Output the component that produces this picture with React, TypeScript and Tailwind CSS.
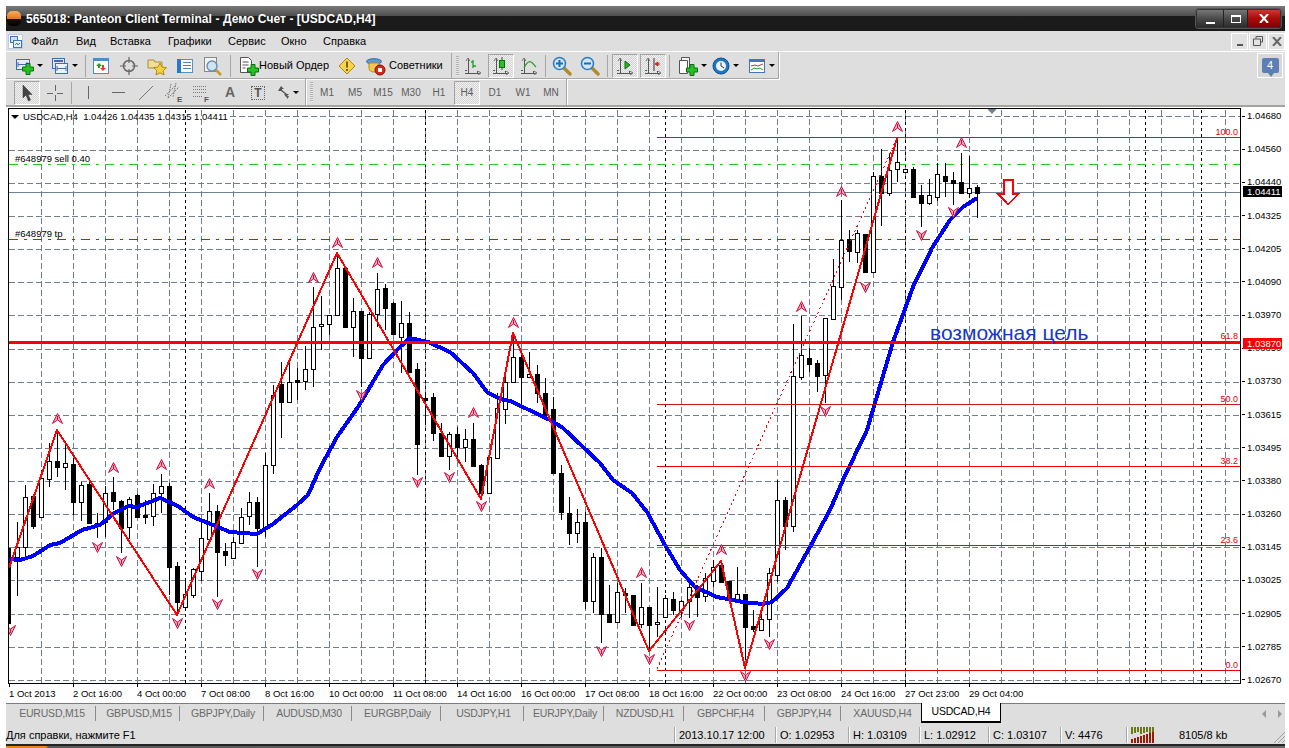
import type { ReactNode } from "react";

type Candle = [number, number, number, number, number];

// high, body top, body bottom, low, black
const candles: Candle[] = [
  [548, 548, 623, 623, 1], [522, 547, 557, 596, 0], [485, 497, 547, 559, 0], [496, 496, 526, 529, 1],
  [470, 478, 517, 518, 0], [443, 461, 479, 487, 0], [430, 461, 467, 477, 1], [445, 463, 467, 490, 0],
  [458, 464, 502, 515, 1], [482, 485, 502, 521, 0], [478, 484, 523, 524, 1], [513, 523, 524, 538, 1],
  [486, 493, 522, 537, 0], [477, 492, 501, 510, 1], [500, 501, 528, 553, 1], [497, 499, 527, 539, 0],
  [494, 495, 517, 518, 1], [500, 515, 517, 524, 1], [484, 493, 516, 526, 0], [474, 486, 493, 513, 0],
  [483, 486, 567, 595, 1], [562, 566, 602, 615, 1], [578, 594, 607, 608, 0], [568, 569, 595, 598, 0],
  [522, 538, 571, 581, 0], [493, 511, 539, 539, 0], [505, 511, 552, 597, 1], [543, 551, 555, 566, 1],
  [537, 542, 558, 559, 0], [508, 517, 543, 543, 0], [492, 502, 516, 525, 0], [497, 502, 528, 567, 1],
  [453, 465, 528, 537, 0], [385, 395, 465, 474, 0], [362, 384, 402, 438, 1], [358, 382, 402, 403, 0],
  [368, 380, 382, 400, 1], [346, 369, 381, 390, 0], [287, 327, 369, 387, 0], [296, 324, 326, 350, 0],
  [315, 315, 324, 335, 0], [255, 268, 315, 315, 0], [267, 268, 327, 328, 1], [298, 311, 327, 357, 0],
  [311, 311, 358, 387, 1], [312, 314, 358, 358, 0], [273, 289, 314, 327, 0], [284, 288, 308, 330, 1],
  [302, 303, 334, 335, 1], [301, 323, 337, 373, 0], [312, 323, 372, 372, 1], [363, 369, 444, 475, 1],
  [392, 398, 400, 425, 1], [393, 397, 433, 441, 1], [423, 433, 456, 457, 1], [432, 434, 456, 470, 0],
  [427, 434, 447, 461, 1], [429, 439, 447, 462, 0], [423, 439, 466, 467, 1], [464, 465, 493, 498, 1],
  [452, 457, 493, 493, 0], [393, 408, 458, 459, 0], [377, 382, 409, 424, 0], [335, 357, 382, 383, 0],
  [353, 357, 377, 407, 1], [352, 374, 377, 377, 0], [365, 374, 393, 403, 1], [378, 393, 415, 417, 1],
  [397, 409, 473, 473, 1], [465, 473, 512, 520, 1], [497, 513, 533, 545, 1], [509, 522, 533, 543, 0],
  [512, 522, 601, 609, 1], [553, 557, 601, 613, 0], [548, 557, 614, 643, 1], [585, 614, 622, 623, 1],
  [583, 592, 622, 623, 0], [588, 593, 595, 613, 1], [595, 595, 625, 626, 1], [583, 607, 624, 628, 0],
  [607, 607, 625, 650, 1], [587, 622, 624, 637, 0], [595, 598, 617, 618, 0], [592, 599, 610, 615, 1],
  [600, 601, 610, 617, 0], [580, 587, 601, 618, 0], [585, 587, 597, 617, 1], [573, 578, 596, 602, 0],
  [560, 567, 581, 587, 0], [563, 565, 582, 582, 1], [581, 581, 597, 602, 1], [567, 594, 601, 602, 0],
  [594, 594, 627, 660, 1], [610, 626, 629, 632, 1], [613, 619, 630, 630, 0], [568, 573, 619, 637, 0],
  [480, 500, 575, 582, 0], [497, 500, 526, 550, 1], [324, 376, 526, 532, 0], [316, 355, 377, 380, 0],
  [348, 358, 364, 372, 1], [360, 363, 376, 392, 1], [318, 318, 375, 403, 0], [259, 286, 319, 319, 0],
  [200, 240, 287, 300, 0], [230, 239, 251, 262, 1], [230, 233, 252, 263, 0], [234, 234, 272, 272, 1],
  [172, 176, 272, 273, 0], [149, 176, 193, 226, 1], [153, 170, 193, 196, 0], [140, 162, 169, 182, 0],
  [169, 169, 172, 172, 0], [167, 169, 197, 197, 1], [185, 195, 203, 227, 1], [179, 195, 203, 205, 0],
  [163, 174, 197, 201, 0], [163, 176, 181, 197, 1], [172, 180, 183, 205, 1], [153, 182, 193, 193, 1],
  [156, 188, 193, 198, 0], [185, 187, 193, 218, 1],
];

const zigzag = "9,568 57,430 177,615 337,253 481,499 513,333 649,651 721,561 745,668 897,138";

const ma =
  "9,559 20,560 33,556 50,545 60,543 82,530 100,525 113,514 128,506 137,507 160,498 178,506 193,517 213,525 230,532 257,534 273,524 297,505 308,495 320,468 337,437 358,407 383,365 400,347 410,338 428,342 450,352 473,373 487,392 500,399 510,401 527,409 550,420 563,428 583,447 600,463 613,480 632,493 647,512 665,545 680,570 695,587 717,597 743,602 763,604 772,602 787,588 810,547 830,510 843,480 867,430 893,342 913,287 932,248 950,220 963,207 977,198";

const upMarks = [[57, 419], [113, 468], [161, 465], [209, 484], [313, 278], [337, 243], [377, 263], [473, 413], [513, 323], [641, 573], [721, 550], [801, 307], [841, 192], [897, 127], [961, 143]];
const downMarks = [[97, 547], [121, 561], [177, 623], [217, 604], [257, 574], [10, 630], [361, 395], [417, 482], [449, 477], [481, 506], [601, 651], [649, 659], [689, 625], [769, 644], [745, 676], [865, 287], [825, 411], [921, 235], [953, 212]];

const prices = ["1.04680", "1.04560", "1.04440", "1.04325", "1.04205", "1.04090", "1.03970", "1.03850", "1.03730", "1.03615", "1.03495", "1.03380", "1.03260", "1.03145", "1.03025", "1.02905", "1.02785", "1.02670"];
const gridY = [116, 150, 183, 216, 249, 282, 315, 349, 382, 415, 448, 481, 514, 547, 580, 614, 647, 680];
const gridX = Array.from({ length: 38 }, (_, i) => 41 + 32 * i);
const dotX = [185, 425, 665, 905, 1145, 1201];

const times = ["1 Oct 2013", "2 Oct 16:00", "4 Oct 00:00", "7 Oct 08:00", "8 Oct 16:00", "10 Oct 00:00", "11 Oct 08:00", "14 Oct 16:00", "16 Oct 00:00", "17 Oct 08:00", "18 Oct 16:00", "22 Oct 00:00", "23 Oct 08:00", "24 Oct 16:00", "27 Oct 23:00", "29 Oct 04:00"];

const fibo = [
  { y: 137, label: "100.0", c: "#c81818" },
  { y: 404, label: "50.0", c: "#c81818" },
  { y: 466, label: "38.2", c: "#f00000" },
  { y: 545, label: "23.6", c: "#f00000" },
  { y: 670, label: "0.0", c: "#e00000" },
];

const tabs = [
  { name: "EURUSD,M15", w: "w-[90px]" },
  { name: "GBPUSD,M15", w: "w-[84px]" },
  { name: "GBPJPY,Daily", w: "w-[84px]" },
  { name: "AUDUSD,M30", w: "w-[88px]" },
  { name: "EURGBP,Daily", w: "w-[89px]" },
  { name: "USDJPY,H1", w: "w-[83px]" },
  { name: "EURJPY,Daily", w: "w-[80px]" },
  { name: "NZDUSD,H1", w: "w-[80px]" },
  { name: "GBPCHF,H4", w: "w-[81px]" },
  { name: "GBPJPY,H4", w: "w-[76px]" },
  { name: "XAUUSD,H4", w: "w-[80px]" },
];

const frames = ["M1", "M5", "M15", "M30", "H1", "H4", "D1", "W1", "MN"];

const activeCls =
  "border border-t-[#a4a4a4] border-l-[#a4a4a4] border-b-white border-r-white bg-[repeating-conic-gradient(#d2d2d2_0%_25%,#f2f2f2_0%_50%)] bg-[length:2px_2px]";

function GreenPlus({ x, y }: { x: number; y: number }) {
  return (
    <path
      transform={`translate(${x} ${y})`}
      d="M3.5 0h4v3.5H11v4H7.500V11h-4V7.500H0v-4h3.500z"
      fill="#22c322"
      stroke="#0a6e0a"
      strokeWidth="1"
    />
  );
}

function Arrowhead() {
  return <span className="ml-[3px] h-0 w-0 border-x-[3px] border-t-[3px] border-x-transparent border-t-black" />;
}

function Axes({ children }: { children?: ReactNode }) {
  return (
    <svg width="18" height="18" viewBox="0 0 18 18">
      <path d="M4 1v15M1 13h2M1 16h15M13 14v3" stroke="#555" strokeWidth="1" fill="none" shapeRendering="crispEdges" />
      <path d="M2 4l2-3 2 3M14 14l3 2-3 2" stroke="#777" fill="none" strokeWidth="1" />
      {children}
    </svg>
  );
}

function Lens({ minus }: { minus?: boolean }) {
  return (
    <svg width="20" height="20" viewBox="0 0 20 20">
      <path d="M11.500 11.500L18 18" stroke="#b08a2c" strokeWidth="3.500" strokeLinecap="round" />
      <circle cx="7.500" cy="7.500" r="6" fill="#cfe6f8" stroke="#2f7fc0" strokeWidth="1.600" />
      <path d={minus ? "M4 7.500h7" : "M4 7.500h7M7.500 4v7"} stroke="#1d6cb0" strokeWidth="2" />
    </svg>
  );
}

function Slot({ w, active, children }: { w: string; active?: boolean; children: ReactNode }) {
  return (
    <div className={`flex h-[24px] shrink-0 items-center justify-center ${w}`}>
      {active ? (
        <div className={`flex h-[24px] w-[26px] items-center justify-center ${activeCls}`}>{children}</div>
      ) : (
        children
      )}
    </div>
  );
}

function Sep({ w }: { w: string }) {
  return (
    <div className={`flex h-[22px] shrink-0 justify-center ${w}`}>
      <div className="h-full w-px bg-[#a6a6a6]" />
    </div>
  );
}

function Gripper() {
  return <div className="ml-[4px] h-[20px] w-[3px] shrink-0 bg-[repeating-linear-gradient(#b0b0b0_0_1px,#e8e8e8_1px_2px)]" />;
}

function ChartToolbar() {
  return (
    <div className="flex h-[27px] items-center bg-[#dedede]">
      <div className="flex h-[27px] w-[773px] shrink-0 items-center border-r border-b border-[#a8a8a8] pl-[8px] pt-px shadow-[1px_1px_0_#fff]">
        <div className="flex h-[24px] w-[34px] shrink-0 items-center pl-[1px]">
          <svg width="19" height="18" viewBox="0 0 19 18">
            <rect x="1.500" y="2.500" width="13" height="10" fill="#e4ecf6" stroke="#3f6fa8" />
            <path d="M3 5v5M3 7.500h9M12 5v5" stroke="#3f6fa8" />
            <GreenPlus x={7.500} y={6.500} />
          </svg>
          <Arrowhead />
        </div>
        <div className="flex h-[24px] w-[36px] shrink-0 items-center pl-[3px]">
          <svg width="18" height="18" viewBox="0 0 18 18">
            <rect x="1.500" y="1.500" width="12" height="10" fill="#dbe6f3" stroke="#3f6fa8" />
            <path d="M3 4h9" stroke="#3f6fa8" strokeWidth="2" />
            <rect x="4.500" y="6.500" width="12" height="10" fill="#eef3fa" stroke="#3f6fa8" />
            <path d="M6 11.500h9M6 9v5M15 9v5" stroke="#3f6fa8" />
          </svg>
          <Arrowhead />
        </div>
        <Sep w="w-[3px]" />
        <Slot w="w-[28px]">
          <svg width="18" height="18" viewBox="0 0 18 18">
            <rect x="1.500" y="1.500" width="15" height="15" fill="#fff" stroke="#4d8dc9" />
            <path d="M2 2h14v2H2z" fill="#4d8dc9" />
            <path d="M7 6l3 3H8v2H6V9H4z" fill="#1aa61a" />
            <path d="M11 14l-3-3h2V8h2v3h2z" fill="#e0402a" />
          </svg>
        </Slot>
        <Slot w="w-[28px]">
          <svg width="18" height="18" viewBox="0 0 18 18" fill="none" stroke="#666">
            <circle cx="9" cy="9" r="5.500" strokeWidth="1.500" />
            <path d="M9 0v6M9 12v6M0 9h6M12 9h6" strokeWidth="1.200" />
          </svg>
        </Slot>
        <Slot w="w-[28px]">
          <svg width="20" height="20" viewBox="0 0 20 20">
            <path d="M1 4h6l1 2h7v6H1z" fill="#f3dd9a" stroke="#a98b3a" />
            <path d="M13 7l2 4 4.500.6-3.300 3 .9 4.400-4.100-2.200-4 2.200.8-4.400-3.200-3 4.400-.6z" fill="#f6d23a" stroke="#b08a1e" />
          </svg>
        </Slot>
        <Slot w="w-[28px]">
          <svg width="18" height="18" viewBox="0 0 18 18">
            <rect x="1.500" y="2.500" width="15" height="13" fill="#fff" stroke="#5b8fc4" />
            <rect x="1" y="2" width="4" height="14" fill="#2b78c6" />
            <path d="M7 5.500h8M7 8.500h8M7 11.500h8" stroke="#4f81b5" />
          </svg>
        </Slot>
        <Slot w="w-[28px]">
          <svg width="20" height="20" viewBox="0 0 20 20">
            <rect x="1.500" y="1.500" width="12" height="14" fill="#f3f3f3" stroke="#888" />
            <path d="M12 13l6 6" stroke="#c49a2e" strokeWidth="2.500" />
            <circle cx="9" cy="10" r="5" fill="#cfe3f3" stroke="#6a8fb0" strokeWidth="1.400" />
          </svg>
        </Slot>
        <Sep w="w-[6px]" />
        <div className="flex h-[24px] w-[100px] shrink-0 items-center pl-[6px]">
          <svg width="20" height="20" viewBox="0 0 20 20">
            <path d="M1.500 1.500h8l3 3v12h-11z" fill="#fff" stroke="#555" />
            <path d="M3.500 6h6M3.500 9h6M3.500 12h3" stroke="#555" />
            <GreenPlus x={8.500} y={8.500} />
          </svg>
          <span className="whitespace-nowrap">Новый Ордер</span>
        </div>
        <Slot w="w-[28px]">
          <svg width="18" height="18" viewBox="0 0 18 18">
            <path d="M9 1l8 8-8 8-8-8z" fill="#f7d44a" stroke="#a8871c" />
            <path d="M9 4.500v6M9 12v2" stroke="#80601a" strokeWidth="2" />
          </svg>
        </Slot>
        <div className="flex h-[24px] w-[87px] shrink-0 items-center pl-[5px]">
          <svg width="20" height="20" viewBox="0 0 20 20">
            <ellipse cx="8" cy="5.500" rx="7.500" ry="2.800" fill="#5d9ad4" stroke="#2f6aa3" />
            <path d="M3 7h10v4c0 4-2 5-5 5s-5-1-5-5z" fill="#f5c945" stroke="#b08a1e" />
            <circle cx="14" cy="14" r="5" fill="#d8281c" stroke="#7a1410" />
            <rect x="12" y="12" width="4" height="4" fill="#fff" />
          </svg>
          <span className="ml-[3px] whitespace-nowrap">Советники</span>
        </div>
        <div className="ml-[3px] h-[26px] w-px bg-[#a8a8a8]" />
        <Gripper />
        <Slot w="w-[28px]">
          <Axes>
            <path d="M9 3v8M7 5h2M9 9h3" stroke="#1ea01e" strokeWidth="1.300" fill="none" />
          </Axes>
        </Slot>
        <Slot w="w-[28px]" active>
          <Axes>
            <path d="M10 0v13" stroke="#0e6e0e" />
            <rect x="7.500" y="3.500" width="5" height="7" fill="#27c427" stroke="#0e6e0e" />
          </Axes>
        </Slot>
        <Slot w="w-[28px]">
          <Axes>
            <path d="M4 11c3-6 5-7 7-6s3 3 5 5" stroke="#1ea01e" strokeWidth="1.200" fill="none" />
          </Axes>
        </Slot>
        <Sep w="w-[5px]" />
        <Slot w="w-[28px]">
          <Lens />
        </Slot>
        <Slot w="w-[28px]">
          <Lens minus />
        </Slot>
        <Sep w="w-[7px]" />
        <Slot w="w-[28px]" active>
          <Axes>
            <path d="M9 4l5 4-5 4z" fill="#25b825" stroke="#0e6e0e" />
          </Axes>
        </Slot>
        <Slot w="w-[28px]" active>
          <Axes>
            <path d="M10 1v13" stroke="#333" />
            <path d="M16 7h-4M11 7l3-2v4z" fill="#d02a1a" stroke="#d02a1a" />
          </Axes>
        </Slot>
        <Sep w="w-[5px]" />
        <div className="flex h-[24px] w-[36px] shrink-0 items-center pl-[6px]">
          <svg width="20" height="20" viewBox="0 0 20 20">
            <path d="M3.500 1.500h8v13h-8z" fill="#f4f4f4" stroke="#555" />
            <path d="M1.500 4.500h8v13h-8z" fill="#fff" stroke="#555" />
            <GreenPlus x={8.500} y={8.500} />
          </svg>
          <Arrowhead />
        </div>
        <div className="flex h-[24px] w-[37px] shrink-0 items-center pl-[4px]">
          <svg width="18" height="18" viewBox="0 0 18 18">
            <circle cx="9" cy="9" r="8" fill="#1e78c8" stroke="#0b4f8f" />
            <circle cx="9" cy="9" r="5" fill="#eef4fa" />
            <path d="M9 5.500V9l3 2" stroke="#333" fill="none" />
          </svg>
          <Arrowhead />
        </div>
        <div className="flex h-[24px] w-[32px] shrink-0 items-center pl-[3px]">
          <svg width="18" height="16" viewBox="0 0 18 16">
            <rect x="1.500" y="1.500" width="15" height="13" fill="#fff" stroke="#3f78b5" />
            <rect x="1" y="1" width="16" height="3" fill="#3f78b5" />
            <path d="M3 8l4-1 3 1 5-2" stroke="#c0392b" fill="none" />
            <path d="M3 12l3-2 3 1 3-1 3 2" stroke="#2f9e2f" fill="none" />
          </svg>
          <Arrowhead />
        </div>
      </div>
      <div className="ml-auto mr-[2px] flex h-[25px] w-[26px] items-center justify-center border border-white bg-[#d8d8d8]">
        <div className="relative flex h-[15px] w-[17px] justify-center rounded-[2px] bg-[#5c80b4] text-[11px] leading-[14px] text-white">
          4
          <span className="absolute -bottom-[4px] left-[6px] h-0 w-0 border-x-[3px] border-t-[4px] border-x-transparent border-t-[#5c80b4]" />
        </div>
      </div>
    </div>
  );
}

function DrawToolbar() {
  return (
    <div className="flex h-[26px] items-center bg-[#dedede]">
      <div className="flex h-[26px] w-[300px] shrink-0 items-center border-r border-[#a8a8a8] pl-[8px] pt-px shadow-[1px_0_0_#fff]">
        <Slot w="w-[26px]" active>
          <svg width="14" height="18" viewBox="0 0 14 18">
            <path d="M3 1v13l3-3 2.500 6 2-1-2.500-5.500h4z" fill="#444" stroke="#333" strokeWidth=".5" />
          </svg>
        </Slot>
        <Slot w="w-[30px]">
          <svg width="18" height="18" viewBox="0 0 18 18" stroke="#666" shapeRendering="crispEdges">
            <path d="M9 1v6M9 11v6M1 9h6M11 9h6" />
          </svg>
        </Slot>
        <Sep w="w-[3px]" />
        <Slot w="w-[31px]">
          <div className="h-[13px] w-px bg-[#666]" />
        </Slot>
        <Slot w="w-[28px]">
          <div className="h-px w-[13px] bg-[#666]" />
        </Slot>
        <Slot w="w-[28px]">
          <svg width="16" height="16" viewBox="0 0 16 16">
            <path d="M1 15L15 1" stroke="#777" />
          </svg>
        </Slot>
        <Slot w="w-[28px]">
          <svg width="20" height="20" viewBox="0 0 20 20" fill="#555">
            <path d="M1 13L12 2M4 15L15 4M7 1l-3 14M12 0L9 14" stroke="#777" fill="none" strokeDasharray="1.500 1" />
            <text x="13" y="19" fontSize="8" fontFamily="Liberation Sans" fontWeight="700">E</text>
          </svg>
        </Slot>
        <Slot w="w-[28px]">
          <svg width="20" height="20" viewBox="0 0 20 20" fill="#555">
            <path d="M1 3.500h13M1 6.500h13M1 9.500h13M1 13.500h9" stroke="#777" strokeDasharray="1 1" />
            <text x="12" y="19" fontSize="8" fontFamily="Liberation Sans" fontWeight="700">F</text>
          </svg>
        </Slot>
        <Slot w="w-[28px]">
          <span className="text-[14px] font-bold text-[#666]">A</span>
        </Slot>
        <Slot w="w-[28px]">
          <div className="flex h-[14px] w-[14px] items-center justify-center border border-dotted border-[#666] text-[12px] font-bold text-[#555]">
            T
          </div>
        </Slot>
        <div className="flex h-[24px] w-[28px] shrink-0 items-center pl-[6px]">
          <svg width="12" height="14" viewBox="0 0 12 14" fill="#555">
            <path d="M3 0l3 3H4l0 1 5 4h2l-3 3-2-3h1L3 5H0zM8 10h3l-1.500 3z" />
          </svg>
          <Arrowhead />
        </div>
      </div>
      <Gripper />
      <div className="flex h-[26px] w-[254px] shrink-0 items-center border-r border-[#a8a8a8] pt-px text-[10px] text-[#5c5c5c] shadow-[1px_0_0_#fff]">
        {frames.map((f) => (
          <Slot key={f} w="w-[28px]" active={f === "H4"}>
            {f}
          </Slot>
        ))}
      </div>
    </div>
  );
}

function Chart() {
  return (
    <svg width="1234" height="576" viewBox="8 108 1234 576" className="block shrink-0" fontFamily="Liberation Sans">
      <rect x="8" y="108" width="1234" height="576" fill="#fff" />
      <g stroke="#708090" strokeDasharray="6 3" shapeRendering="crispEdges">
        {gridY.map((y) => (
          <line key={y} x1={y === 116 ? 230 : 9} x2="1241" y1={y + 0.5} y2={y + 0.5} />
        ))}
        {gridX.map((x) => (
          <line key={x} x1={x + 0.5} x2={x + 0.5} y1="110" y2="683" />
        ))}
      </g>
      <g stroke="#000" strokeDasharray="3 3" shapeRendering="crispEdges">
        {dotX.map((x) => (
          <line key={x} x1={x + 0.5} x2={x + 0.5} y1="110" y2="683" />
        ))}
      </g>
      <line x1="9" x2="1241" y1="192.500" y2="192.500" stroke="#708090" shapeRendering="crispEdges" />
      <line x1="9" x2="1241" y1="164.500" y2="164.500" stroke="#22d022" strokeDasharray="9 6 3 6" shapeRendering="crispEdges" />
      <line x1="9" x2="1241" y1="239.500" y2="239.500" stroke="#ff0000" strokeDasharray="9 6 3 6" shapeRendering="crispEdges" />
      <g shapeRendering="crispEdges">
        {candles.map(([high, top, bottom, low, black], i) => {
          const x = 9 + 8 * i;
          return (
            <g key={i}>
              <rect x={x} y={high} width="1" height={low - high} fill="#000" />
              <rect
                x={i === 0 ? x + 0.5 : x - 1.5}
                y={top + 0.5}
                width={i === 0 ? 1 : 4}
                height={Math.max(bottom - top, 1)}
                fill={black ? "#000" : "#fff"}
                stroke="#000"
              />
            </g>
          );
        })}
      </g>
      <polyline points={ma} fill="none" stroke="#0000ff" strokeWidth="4" strokeLinejoin="round" shapeRendering="crispEdges" />
      <polyline points={zigzag} fill="none" stroke="#ff0000" strokeWidth="2" strokeLinejoin="round" shapeRendering="crispEdges" />
      <line x1="657" y1="669" x2="897" y2="138" stroke="#ff0000" strokeDasharray="2 3" shapeRendering="crispEdges" />
      {fibo.map((f) => (
        <g key={f.label}>
          <line x1="657" x2="1241" y1={f.y + 0.5} y2={f.y + 0.5} stroke={f.c} shapeRendering="crispEdges" />
          <text x="1238" y={f.y - 2} textAnchor="end" fontSize="9" fill="#e00000">
            {f.label}
          </text>
        </g>
      ))}
      <rect x="9" y="341" width="1232" height="3" fill="#ff0000" />
      <text x="1238" y="339" textAnchor="end" fontSize="9" fill="#e00000">
        61.8
      </text>
      {upMarks.map(([x, y]) => (
        <g key={`${x}-${y}`} transform={`translate(${x + 0.5} ${y})`}>
          <path d="M0-5.500L5 4.500 0 1-5 4.500z" fill="#f4a8bc" stroke="#cc1040" />
          <path d="M0-3V1" stroke="#cc1040" />
        </g>
      ))}
      {downMarks.map(([x, y]) => (
        <g key={`${x}-${y}`} transform={`translate(${x + 0.5} ${y})`}>
          <path d="M0 5.500L5-4.500 0-1-5-4.500z" fill="#f4a8bc" stroke="#cc1040" />
          <path d="M0 3V-1" stroke="#cc1040" />
        </g>
      ))}
      <path d="M1003.500 180h9v14h6l-10.500 10.500L998 194h5.500z" fill="#fff" stroke="#ff0000" strokeWidth="2" shapeRendering="crispEdges" />
      <path d="M987 108.500h10l-5 5.500z" fill="#708090" />
      <path d="M11 115h8l-4 4z" fill="#000" />
      <text x="23" y="120" fontSize="9.500" fill="#000">
        USDCAD,H4 &#160;1.04426 1.04435 1.04315 1.04411
      </text>
      <text x="15" y="162" fontSize="9.500" fill="#000">
        #648979 sell 0.40
      </text>
      <text x="15" y="237" fontSize="9.500" fill="#000">
        #648979 tp
      </text>
      <text x="930" y="340" fontSize="21" fill="#1638c8">
        возможная цель
      </text>
      <rect x="8.500" y="108.500" width="1232" height="575" fill="none" stroke="#000" shapeRendering="crispEdges" />
    </svg>
  );
}

function PriceAxis() {
  return (
    <div className="relative h-[576px] w-[43px] shrink-0 bg-white text-[9.500px]">
      <div className="mt-[3px] flex h-[574px] flex-col justify-between">
        {prices.map((p) => (
          <div key={p} className="flex h-[10px] items-center leading-[10px] text-black">
            <div className="h-px w-[3px] bg-black" />
            <span className="ml-[2px]">{p}</span>
          </div>
        ))}
      </div>
      <div className="absolute left-[1px] top-[78px] h-[11px] w-[39px] bg-black pl-[4px] text-[9.500px] leading-[11px] text-white">1.04411</div>
      <div className="absolute left-[1px] top-[230px] h-[11px] w-[39px] bg-[#ff0000] pl-[4px] text-[9.500px] leading-[11px] text-white">1.03870</div>
    </div>
  );
}

function TabBar() {
  return (
    <div className="flex h-[20px] items-center border-t border-[#7c7c7c] bg-[#dedede] text-[10.500px] tracking-[-0.2px] text-[#6a6a6a]">
      {tabs.map((t, i) => (
        <div key={t.name} className={`flex h-[15px] shrink-0 items-center justify-center pl-[3px] ${t.w} ${i < 10 ? "border-r border-[#8a8a8a]" : ""}`}>
          {t.name}
        </div>
      ))}
      <div className="-mt-px flex h-[20px] w-[80px] shrink-0 items-center justify-center border-x border-b-2 border-black bg-white text-black">
        USDCAD,H4
      </div>
      <div className="ml-auto mr-[3px] flex gap-[12px]">
        <span className="h-0 w-0 border-y-[4px] border-r-[4px] border-y-transparent border-r-[#9a9a9a]" />
        <span className="h-0 w-0 border-y-[4px] border-l-[4px] border-y-transparent border-l-[#9a9a9a]" />
      </div>
    </div>
  );
}

function StatusBar() {
  const cell = "flex h-[16px] shrink-0 items-center border-l border-[#a8a8a8] pl-[4px] shadow-[inset_1px_0_0_#fff]";
  return (
    <div className="flex h-[21px] items-center bg-[#dedede] pt-[3px] text-black">
      <div className="w-[668px] shrink-0">Для справки, нажмите F1</div>
      <div className={`${cell} w-[101px]`}>2013.10.17 12:00</div>
      <div className={`${cell} w-[73px]`}>O: 1.02953</div>
      <div className={`${cell} w-[71px]`}>H: 1.03109</div>
      <div className={`${cell} w-[69px]`}>L: 1.02912</div>
      <div className={`${cell} w-[72px]`}>C: 1.03107</div>
      <div className={`${cell} w-[66px]`}>V: 4476</div>
      <div className={`${cell} relative grow`}>
        <svg width="25" height="16" viewBox="0 0 25 16" shapeRendering="crispEdges">
          {[0, 1, 2, 3, 4, 5, 6, 7].map((i) => (
            <g key={i}>
              <rect x={i * 3} y={0} width="2" height={7 - (i % 3)} fill="#6b7a10" />
              <rect x={i * 3} y={15 - i - 3} width="2" height={i + 4} fill="#9b1a08" />
            </g>
          ))}
        </svg>
        <span className="ml-[23px]">8105/8 kb</span>
        <svg width="12" height="12" viewBox="0 0 12 12" className="absolute bottom-0 right-0" stroke="#a0a0a0">
          <path d="M12 1L1 12M12 5L5 12M12 9L9 12" />
        </svg>
      </div>
    </div>
  );
}

export default function App() {
  return (
    <div className="h-[748px] w-[1289px] overflow-hidden bg-white pl-[6px] pr-[4px] pt-[6px] font-['Liberation_Sans',sans-serif] text-[11px] text-black">
      <div className="flex h-[25px] items-center bg-[linear-gradient(#7a7a7a_0,#4e4e4e_10px,#1c1c1c_10px,#1a1a1a_100%)]">
        <div className="ml-[1px] h-[15px] w-[14px] rounded-[5px] bg-[linear-gradient(#f7b060_0,#e8781c_50%,#1c1008_55%,#000_100%)]" />
        <span className="ml-[5px] text-[12px] font-bold tracking-[0.07px] text-white">
          565018: Panteon Client Terminal - Демо Счет - [USDCAD,H4]
        </span>
        <div className="ml-auto mr-[4px] flex h-[19px] w-[85px] items-stretch overflow-hidden rounded-[3px] border border-[#333] shadow-[0_0_0_1px_#555]">
          <div className="flex w-[26px] items-end justify-center bg-[linear-gradient(#777,#4a4a4a_50%,#2c2c2c)] pb-[3px]">
            <div className="h-[2px] w-[9px] bg-white" />
          </div>
          <div className="flex w-[25px] items-center justify-center border-x border-[#222] bg-[linear-gradient(#777,#4a4a4a_50%,#2c2c2c)]">
            <div className="h-[8px] w-[10px] border border-t-2 border-white" />
          </div>
          <div className="flex grow items-center justify-center bg-[linear-gradient(#c83a30,#a80c08_50%,#7c0404)]">
            <svg width="10" height="9" viewBox="0 0 10 9" stroke="#fff" strokeWidth="2">
              <path d="M1 0l8 9M9 0L1 9" />
            </svg>
          </div>
        </div>
      </div>

      <div className="flex h-[21px] items-center border-b border-white bg-[#dedede]">
        <svg width="15" height="15" viewBox="0 0 15 15" className="ml-[2px]">
          <rect x=".500" y=".500" width="14" height="14" fill="#fff" stroke="#b8cce4" />
          <rect x="2.500" y="2.500" width="7" height="6" fill="#cfe0f3" stroke="#3f78b5" />
          <rect x="5.500" y="6.500" width="8" height="7" fill="#e6eef8" stroke="#3f78b5" />
          <path d="M7 11l2-2 1 2 2-2" stroke="#3f78b5" fill="none" />
        </svg>
        <div className="ml-[8px] flex">
          <span className="w-[45px]">Файл</span>
          <span className="w-[34px]">Вид</span>
          <span className="w-[58px]">Вставка</span>
          <span className="w-[60px]">Графики</span>
          <span className="w-[53px]">Сервис</span>
          <span className="w-[42px]">Окно</span>
          <span className="w-[60px]">Справка</span>
        </div>
        <div className="ml-auto flex h-[17px] gap-px">
          <div className="flex w-[17px] items-end justify-center border border-white bg-[#e2e2e2] pb-[3px]">
            <div className="h-[2px] w-[6px] bg-[#555]" />
          </div>
          <div className="flex w-[18px] items-center justify-center border border-white bg-[#e2e2e2]">
            <svg width="10" height="10" viewBox="0 0 10 10" fill="none" stroke="#555">
              <path d="M3 2.500V.500h6.500V6H7.500M.500 3h7v6.500h-7z" />
            </svg>
          </div>
          <div className="flex w-[17px] items-center justify-center border border-white bg-[#e2e2e2]">
            <svg width="10" height="9" viewBox="0 0 10 9" stroke="#666" strokeWidth="2">
              <path d="M1 0l8 9M9 0L1 9" />
            </svg>
          </div>
        </div>
      </div>

      <ChartToolbar />
      <DrawToolbar />
      <div className="h-[3px] border-t-2 border-[#a4a4a0] bg-white" />

      <div className="flex h-[595px] flex-col bg-white">
        <div className="flex h-[576px] pl-[2px]">
          <Chart />
          <PriceAxis />
        </div>
        <div className="flex h-[19px] pl-[3px] text-[9.500px] leading-[12px] text-black">
          {times.map((t) => (
            <div key={t} className="w-[64px] shrink-0">
              <div className="h-[3px] w-px bg-black" />
              <div className="mt-[1px] whitespace-nowrap">{t}</div>
            </div>
          ))}
        </div>
      </div>

      <TabBar />
      <StatusBar />
      <div className="h-[4px] border-t-2 border-[#242424] bg-[linear-gradient(90deg,#e8851c_0,#e8851c_40px,#5a5a5a_42px,#6a6a6a_100%)]" />
    </div>
  );
}
